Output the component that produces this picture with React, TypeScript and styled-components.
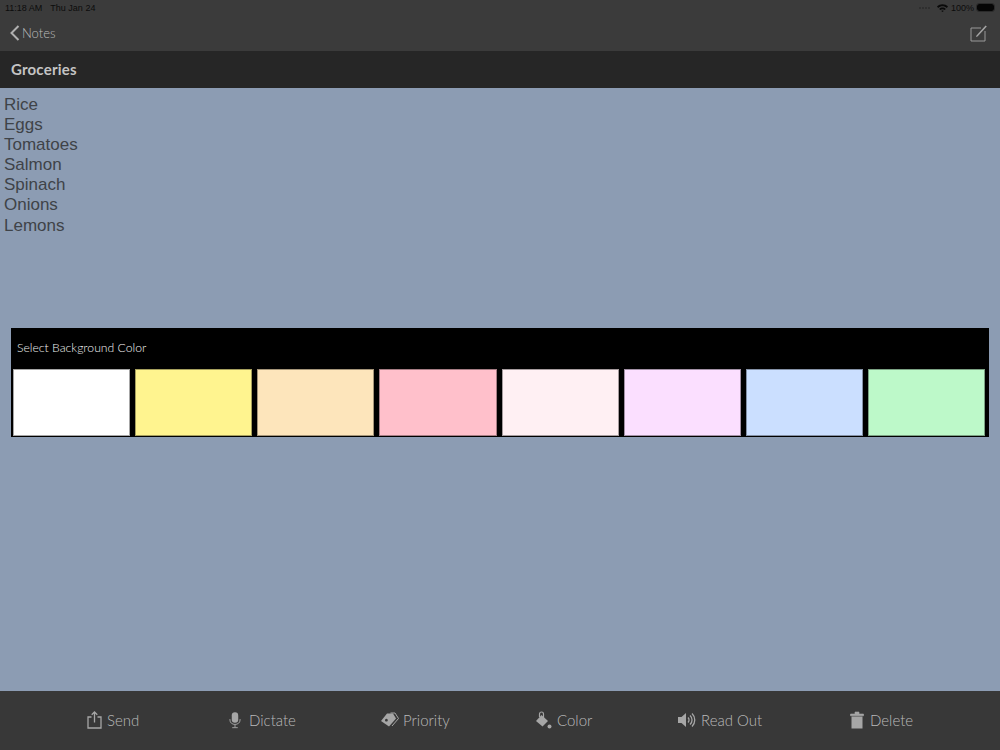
import React from 'react';
import styled, { createGlobalStyle } from 'styled-components';

const GlobalStyle = createGlobalStyle`
  html, body {
    margin: 0;
    padding: 0;
    height: 100%;
    background: #8c9cb3;
    font-family: "Lato", "Liberation Sans", sans-serif;
  }
`;

const Page = styled.div`
  width: 1000px;
  height: 750px;
  display: flex;
  flex-direction: column;
  overflow: hidden;
`;

const TopBar = styled.header`
  height: 51px;
  background: #3b3b3b;
  display: flex;
  flex-direction: column;
`;

const StatusBar = styled.div`
  height: 15px;
  padding: 0 6px 0 5px;
  display: flex;
  align-items: center;
  justify-content: space-between;
  font-family: "Liberation Sans", sans-serif;
  font-size: 9px;
  color: #0c0c0c;
`;

const StatusGroup = styled.div<{ $gap: number }>`
  display: flex;
  align-items: center;
  gap: ${(p) => p.$gap}px;
`;

const Signal = styled.div`
  display: flex;
  gap: 1px;
  margin-right: 4px;
`;

const SignalDot = styled.span`
  width: 2px;
  height: 2px;
  border-radius: 50%;
  background: #2c2c2c;
`;

const Battery = styled.div`
  width: 17px;
  height: 7px;
  background: #050505;
  border-radius: 2px;
  outline: 1px solid #2a2a2a;
`;

const NavBar = styled.div`
  flex: 1;
  display: flex;
  align-items: center;
  justify-content: space-between;
  padding: 0 12px 0 10px;
`;

const BackLink = styled.div`
  display: flex;
  align-items: center;
  gap: 2px;
  font-size: 13px;
  font-weight: 300;
  color: #bcbcbc;
`;

const TitleBar = styled.div`
  height: 37px;
  box-sizing: border-box;
  background: #262626;
  padding: 0 0 2px 11px;
  display: flex;
  align-items: center;
  font-size: 15px;
  font-weight: 700;
  letter-spacing: 0.2px;
  color: #c4c4c4;
`;

const Content = styled.main`
  flex: 1;
  background: #8c9cb3;
  padding-top: 7px;
  display: flex;
  flex-direction: column;
`;

const NoteText = styled.div`
  padding-left: 4px;
  font-family: "Liberation Sans", sans-serif;
  font-size: 17px;
  line-height: 20.1px;
  color: #3f4348;
`;

const Picker = styled.section`
  margin: 92px 11px 0;
  height: 109px;
  background: #000;
  display: flex;
  flex-direction: column;
`;

const PickerTitle = styled.div`
  height: 41px;
  box-sizing: border-box;
  padding: 0 6px 2px;
  display: flex;
  align-items: center;
  font-size: 12.2px;
  font-weight: 300;
  color: #f2f2f2;
`;

const Swatches = styled.div`
  flex: 1;
  padding: 0 4px 1px 2px;
  display: grid;
  grid-template-columns: repeat(8, 1fr);
  column-gap: 5px;
`;

const Swatch = styled.div<{ $color: string }>`
  background: ${(p) => p.$color};
  box-shadow: inset 0 0 0 1px rgba(0, 0, 0, 0.35);
`;

const BottomBar = styled.footer`
  height: 59px;
  box-sizing: border-box;
  background: #383838;
  display: flex;
  align-items: center;
  padding: 0 0 2px 87px;
`;

const Action = styled.div<{ $width: number; $gap?: number }>`
  width: ${(p) => p.$width}px;
  display: flex;
  align-items: center;
  gap: ${(p) => p.$gap ?? 6}px;
  font-size: 15px;
  font-weight: 300;
  color: #bababa;
`;

const colors = ['#ffffff', '#fff48f', '#fde5bb', '#ffc0cb', '#fff0f3', '#fbdfff', '#cbdfff', '#bdf9c9'];
const items = ['Rice', 'Eggs', 'Tomatoes', 'Salmon', 'Spinach', 'Onions', 'Lemons'];

const App = () => (
  <Page>
    <GlobalStyle />
    <TopBar>
      <StatusBar>
        <StatusGroup $gap={8}>
          <span>11:18 AM</span>
          <span>Thu Jan 24</span>
        </StatusGroup>
        <StatusGroup $gap={3}>
          <Signal>
            <SignalDot />
            <SignalDot />
            <SignalDot />
            <SignalDot />
          </Signal>
          <svg width="11" height="8" viewBox="0 0 11 8">
            <path d="M0 2.6C3 -.4 8 -.4 11 2.6L9.8 3.9C7.4 1.6 3.6 1.6 1.2 3.9Z" fill="#0a0a0a" />
            <path d="M2.2 4.9C4 3.1 7 3.1 8.8 4.9L7.6 6.1C6.4 5 4.6 5 3.4 6.1Z" fill="#0a0a0a" />
            <path d="M4.3 6.9C5 6.3 6 6.3 6.7 6.9L5.5 8Z" fill="#0a0a0a" />
          </svg>
          <span>100%</span>
          <Battery />
        </StatusGroup>
      </StatusBar>
      <NavBar>
        <BackLink>
          <svg width="10" height="16" viewBox="0 0 10 16">
            <path d="M8.5 1L1.5 8L8.5 15" fill="none" stroke="#b0b0b0" strokeWidth="2" />
          </svg>
          Notes
        </BackLink>
        <svg width="18" height="18" viewBox="0 0 18 18">
          <path d="M11 4H1V17H15V7" fill="none" stroke="#9a9a9a" strokeWidth="1" />
          <path d="M6.5 11.5L6 13L7.5 12.5L16.8 2.6L15.6 1.5Z" fill="#a5a5a5" />
        </svg>
      </NavBar>
    </TopBar>
    <TitleBar>Groceries</TitleBar>
    <Content>
      <NoteText>
        {items.map((item) => (
          <div key={item}>{item}</div>
        ))}
      </NoteText>
      <Picker>
        <PickerTitle>Select Background Color</PickerTitle>
        <Swatches>
          {colors.map((color) => (
            <Swatch key={color} $color={color} />
          ))}
        </Swatches>
      </Picker>
    </Content>
    <BottomBar>
      <Action $width={142} $gap={5}>
        <svg width="15" height="18" viewBox="0 0 15 18">
          <path d="M4.5 6H1V17H14V6H10.5" fill="none" stroke="#a6a6a6" strokeWidth="1.3" />
          <path d="M7.5 1V11.5M4.7 3.8L7.5 1L10.3 3.8" fill="none" stroke="#a6a6a6" strokeWidth="1.3" />
        </svg>
        Send
      </Action>
      <Action $width={152} $gap={8}>
        <svg width="12" height="18" viewBox="0 0 13 18">
          <rect x="3" y="0.5" width="7" height="11.5" rx="3.5" fill="#a6a6a6" />
          <path d="M1 8V9C1 12 3.5 13.8 6.5 13.8S12 12 12 9V8M6.5 14V17M3.5 17.3H9.5" fill="none" stroke="#a6a6a6" strokeWidth="1" />
        </svg>
        Dictate
      </Action>
      <Action $width={154} $gap={4}>
        <svg width="18" height="15" viewBox="0 0 18 15">
          <path d="M9.5 1H14L17.5 6.5L11 14" fill="none" stroke="#a6a6a6" strokeWidth="1" />
          <path d="M6 1.5H12L15 6.5L8 14.5L0 9ZM4 8.2A1.4 1.4 0 1 0 4 8.19Z" fill="#a6a6a6" fillRule="evenodd" />
        </svg>
        Priority
      </Action>
      <Action $width={143} $gap={5}>
        <svg width="17" height="18" viewBox="0 0 17 18">
          <path d="M6.5 4L13 10L7.5 15.5L1 10Z" fill="#a6a6a6" />
          <path d="M4.5 6V3A2 2 0 0 1 8.5 3V8" fill="none" stroke="#a6a6a6" strokeWidth="1.2" />
          <circle cx="14.5" cy="15.5" r="2" fill="#a6a6a6" />
        </svg>
        Color
      </Action>
      <Action $width={172} $gap={5}>
        <svg width="18" height="16" viewBox="0 0 18 16">
          <path d="M0 5H3.5L8 1V15L3.5 11H0Z" fill="#a6a6a6" />
          <path d="M10 5.5A3.5 3.5 0 0 1 10 10.5M12 3.5A6 6 0 0 1 12 12.5M14 1.5A9 9 0 0 1 14 14.5" fill="none" stroke="#a6a6a6" strokeWidth="1.3" />
        </svg>
        Read Out
      </Action>
      <Action $width={80} $gap={6}>
        <svg width="14" height="18" viewBox="0 0 14 18">
          <path d="M0.5 3H13.5V4.8H0.5ZM5 3V1H9V3" fill="#a6a6a6" stroke="#a6a6a6" strokeWidth="0.6" />
          <path d="M1.5 5.5H12.5V17.5H1.5Z" fill="#a6a6a6" />
        </svg>
        Delete
      </Action>
    </BottomBar>
  </Page>
);

export default App;
